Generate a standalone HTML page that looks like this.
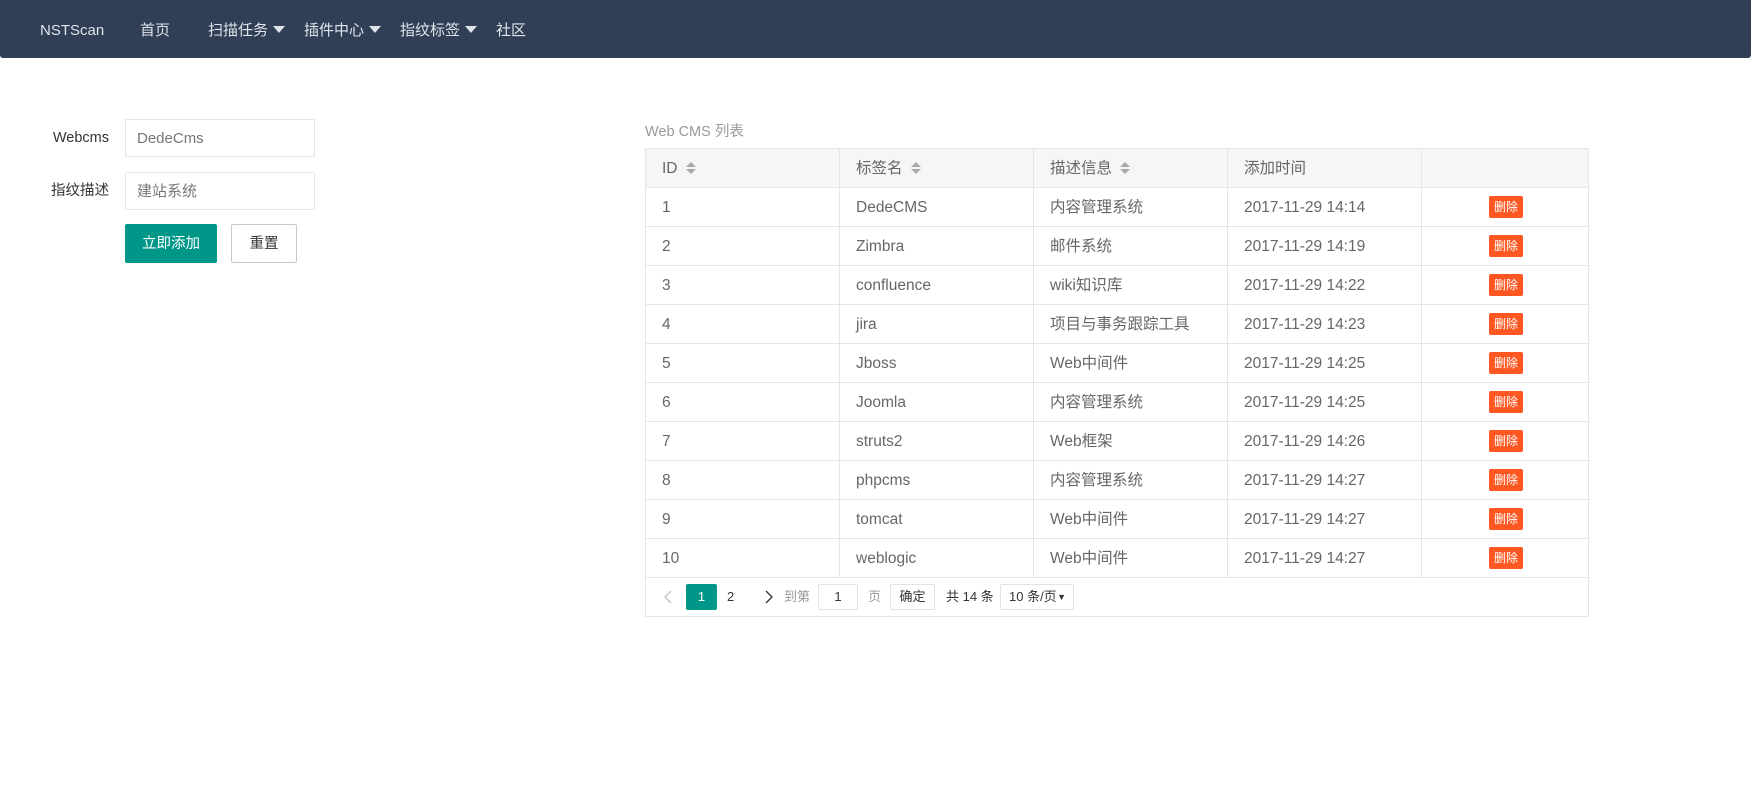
<!DOCTYPE html>
<html><head><meta charset="utf-8"><style>
*{box-sizing:border-box;margin:0;padding:0}
body{width:1751px;height:788px;background:#fff;font-family:"Liberation Sans","Noto Sans CJK SC",sans-serif;font-size:15.5px;color:#666;position:relative;overflow:hidden}
.nav{position:absolute;left:0;top:0;width:1751px;height:58px;background:#303f56;border-radius:0 0 3px 3px}
.nav span{position:absolute;top:21px;color:#dfe3ea;font-size:15px;white-space:nowrap;line-height:20px}
.car{display:inline-block;width:0;height:0;border-left:6px solid transparent;border-right:6px solid transparent;border-top:7px solid #dfe3ea;margin-left:5px;vertical-align:middle;position:relative;top:-2px}
.abs{position:absolute}
.lab{color:#333;text-align:right;width:100px;left:9px;font-size:14.5px;line-height:20px}
.inp{left:125px;width:190px;height:38px;border:1px solid #e6e6e6;border-radius:2px;padding-left:11px;line-height:38px;color:#777;font-size:15px}
table{position:absolute;left:645px;top:148px;width:944px;border-collapse:collapse}
td,th{border:1px solid #e6e6e6;height:39px;padding:2px 0 0 16px;text-align:left;font-weight:normal;color:#666;line-height:20px;vertical-align:middle}
th{background:#f6f6f6}
.so{display:inline-block;vertical-align:middle;margin-left:8px;width:10px;height:12px;position:relative;top:-1px}
.so:before{content:"";position:absolute;left:0;top:0;border-left:5px solid transparent;border-right:5px solid transparent;border-bottom:5px solid #aaa}
.so:after{content:"";position:absolute;left:0;top:7px;border-left:5px solid transparent;border-right:5px solid transparent;border-top:5px solid #aaa}
.del{display:inline-block;background:#ff5722;color:#fff;font-size:12px;width:34px;height:22px;line-height:22px;text-align:center;border-radius:2px;margin-left:51px;vertical-align:middle;position:relative;top:-1px}
.pg{position:absolute;left:645px;top:577px;width:944px;height:40px;border:1px solid #e6e6e6;border-top:none;font-size:13px;color:#333}
.pg span{position:absolute;top:12px;white-space:nowrap;line-height:16px}
.bx{border:1px solid #e2e2e2;border-radius:2px;height:26px;text-align:center;line-height:24px!important;top:7px!important}
</style></head><body>
<div class="nav">
<span style="left:40px">NSTScan</span>
<span style="left:140px">首页</span>
<span style="left:208px">扫描任务<i class="car"></i></span>
<span style="left:304px">插件中心<i class="car"></i></span>
<span style="left:400px">指纹标签<i class="car"></i></span>
<span style="left:496px">社区</span>
</div>
<div class="abs lab" style="top:128px">Webcms</div>
<div class="abs inp" style="top:119px">DedeCms</div>
<div class="abs lab" style="top:181px">指纹描述</div>
<div class="abs inp" style="top:172px">建站系统</div>
<div class="abs" style="left:125px;top:224px;width:92px;height:39px;background:#009688;color:#fff;border-radius:2px;text-align:center;line-height:41px;font-size:14.5px">立即添加</div>
<div class="abs" style="left:231px;top:224px;width:66px;height:39px;border:1px solid #c9c9c9;border-radius:2px;color:#333;text-align:center;line-height:39px;font-size:14.5px">重置</div>
<div class="abs" style="left:645px;top:120px;color:#999;font-size:14.5px">Web CMS 列表</div>
<table>
<colgroup><col style="width:194px"><col style="width:194px"><col style="width:194px"><col style="width:194px"><col></colgroup>
<tr><th>ID<i class="so"></i></th><th>标签名<i class="so"></i></th><th>描述信息<i class="so"></i></th><th>添加时间</th><th></th></tr>
<tr><td>1</td><td>DedeCMS</td><td>内容管理系统</td><td>2017-11-29 14:14</td><td><span class="del">删除</span></td></tr>
<tr><td>2</td><td>Zimbra</td><td>邮件系统</td><td>2017-11-29 14:19</td><td><span class="del">删除</span></td></tr>
<tr><td>3</td><td>confluence</td><td>wiki知识库</td><td>2017-11-29 14:22</td><td><span class="del">删除</span></td></tr>
<tr><td>4</td><td>jira</td><td>项目与事务跟踪工具</td><td>2017-11-29 14:23</td><td><span class="del">删除</span></td></tr>
<tr><td>5</td><td>Jboss</td><td>Web中间件</td><td>2017-11-29 14:25</td><td><span class="del">删除</span></td></tr>
<tr><td>6</td><td>Joomla</td><td>内容管理系统</td><td>2017-11-29 14:25</td><td><span class="del">删除</span></td></tr>
<tr><td>7</td><td>struts2</td><td>Web框架</td><td>2017-11-29 14:26</td><td><span class="del">删除</span></td></tr>
<tr><td>8</td><td>phpcms</td><td>内容管理系统</td><td>2017-11-29 14:27</td><td><span class="del">删除</span></td></tr>
<tr><td>9</td><td>tomcat</td><td>Web中间件</td><td>2017-11-29 14:27</td><td><span class="del">删除</span></td></tr>
<tr><td>10</td><td>weblogic</td><td>Web中间件</td><td>2017-11-29 14:27</td><td><span class="del">删除</span></td></tr>
</table>
<div class="pg">
<svg style="position:absolute;left:18px;top:13px" width="8" height="14"><path d="M7 1L1 7l6 6" fill="none" stroke="#c2c2c2" stroke-width="1.3"/></svg>
<span style="left:40px;top:7px;width:31px;height:26px;background:#009688;color:#fff;text-align:center;line-height:26px;border-radius:2px">1</span>
<span style="left:81px">2</span>
<svg style="position:absolute;left:119px;top:13px" width="8" height="14"><path d="M1 1l6 6-6 6" fill="none" stroke="#333" stroke-width="1.3"/></svg>
<span style="left:138px;color:#999">到第</span>
<span class="bx" style="left:172px;width:40px">1</span>
<span style="left:222px;color:#999">页</span>
<span class="bx" style="left:244px;width:45px">确定</span>
<span style="left:300px">共 14 条</span>
<span class="bx" style="left:354px;width:74px;text-align:left;padding-left:8px">10 条/页<small style="font-size:9px;position:absolute;right:7px;top:0">▼</small></span>
</div>
</body></html>
